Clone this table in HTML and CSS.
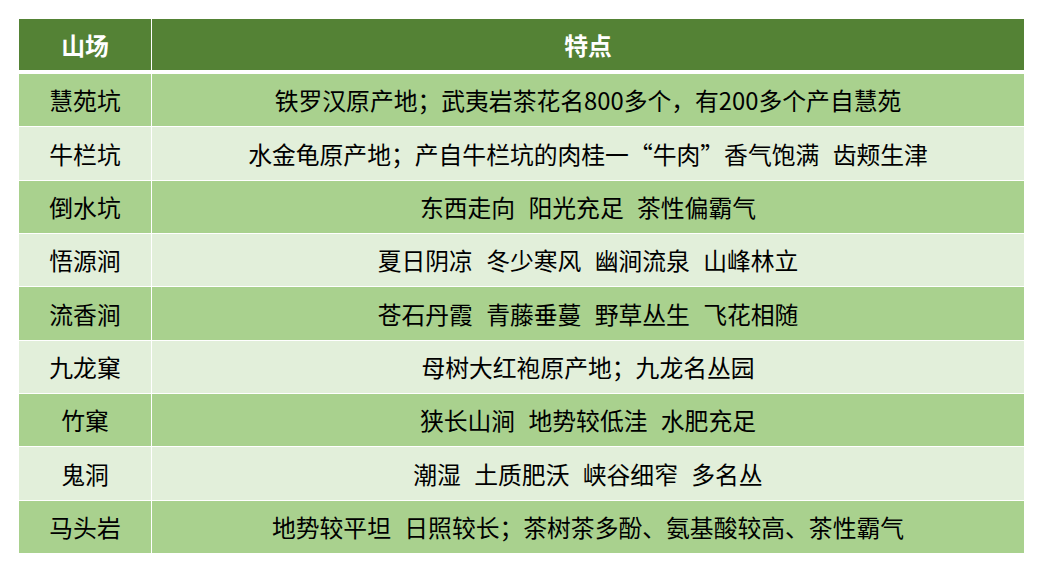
FILE: index.html
```html
<!DOCTYPE html>
<html lang="zh-CN">
<head>
<meta charset="utf-8">
<title>山场特点</title>
<link rel="stylesheet" href="styles.css">
</head>
<body>
<div class="page">
<table class="tea">
<thead>
<tr><th class="c1">山场</th><th class="c2">特点</th></tr>
</thead>
<tbody>
<tr class="dark"><td class="c1">慧苑坑</td><td class="c2">铁罗汉原产地；武夷岩茶花名800多个，有200多个产自慧苑</td></tr>
<tr class="light"><td class="c1">牛栏坑</td><td class="c2">水金龟原产地；产自牛栏坑的肉桂一“牛肉”香气饱满 齿颊生津</td></tr>
<tr class="dark"><td class="c1">倒水坑</td><td class="c2">东西走向 阳光充足 茶性偏霸气</td></tr>
<tr class="light"><td class="c1">悟源涧</td><td class="c2">夏日阴凉 冬少寒风 幽涧流泉 山峰林立</td></tr>
<tr class="dark"><td class="c1">流香涧</td><td class="c2">苍石丹霞 青藤垂蔓 野草丛生 飞花相随</td></tr>
<tr class="light"><td class="c1">九龙窠</td><td class="c2">母树大红袍原产地；九龙名丛园</td></tr>
<tr class="dark"><td class="c1">竹窠</td><td class="c2">狭长山涧 地势较低洼 水肥充足</td></tr>
<tr class="light"><td class="c1">鬼洞</td><td class="c2">潮湿 土质肥沃 峡谷细窄 多名丛</td></tr>
<tr class="dark"><td class="c1">马头岩</td><td class="c2">地势较平坦 日照较长；茶树茶多酚、氨基酸较高、茶性霸气</td></tr>
</tbody>
</table>
</div>
</body>
</html>
```
FILE: styles.css
```css
html, body {
  margin: 0;
  padding: 0;
  background: #ffffff;
}
.page {
  padding: 19px 20px 0 19px;
  font-family: "Noto Sans CJK SC", "Noto Sans", sans-serif;
}
.tea {
  width: 1005px;
  border-collapse: separate;
  border-spacing: 0;
  table-layout: fixed;
}
.tea th, .tea td {
  padding: 0;
  text-align: center;
  vertical-align: middle;
  font-size: 23.8px;
  line-height: 1;
  white-space: nowrap;
}
.tea th {
  height: 51px;
  background: #548235;
  color: #ffffff;
  font-weight: bold;
  border-bottom: 4px solid #ffffff;
}
.tea td {
  height: 52.33px;
  color: #000000;
  font-weight: normal;
}
.tea td.c2 {
  word-spacing: 8px;
}
.tea tbody tr + tr td {
  border-top: 1px solid #ffffff;
}
.tea .c1 {
  width: 132px;
  border-right: 1px solid #ffffff;
}
.tea .dark td { background: #a9d18e; }
.tea .light td { background: #e2efda; }
```
